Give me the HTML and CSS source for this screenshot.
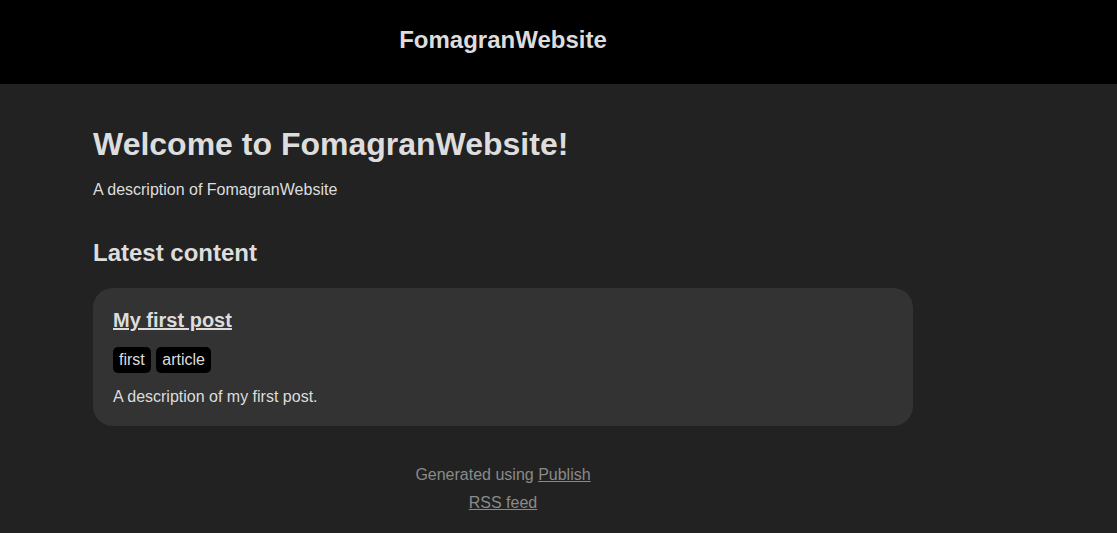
FILE: index.html
```html
<!DOCTYPE html>
<html lang="en">
<head>
  <meta charset="UTF-8" />
  <meta name="viewport" content="width=device-width, initial-scale=1.0"/>
  <title>FomagranWebsite</title>
  <link rel="stylesheet" href="styles.css">
</head>
<body>

<header>
  <div class="wrapper">
    <a class="site-name" href="#">FomagranWebsite</a>
  </div>
</header>

<div class="wrapper content">
  <h1>Welcome to FomagranWebsite!</h1>
  <p class="description">A description of FomagranWebsite</p>
  <h2>Latest content</h2>
  <ul class="item-list">
    <li>
      <article>
        <h1><a href="#">My first post</a></h1>
        <ul class="tag-list">
          <li><a href="#">first</a></li>
          <li><a href="#">article</a></li>
        </ul>
        <p>A description of my first post.</p>
      </article>
    </li>
  </ul>
</div>

<footer>
  <p>Generated using <a href="#">Publish</a></p>
  <p><a href="#">RSS feed</a></p>
</footer>

</body>
</html>
```

FILE: styles.css
```css
* { margin: 0; padding: 0; box-sizing: border-box; }
body {
  background: #222;
  color: #ddd;
  font-family: "Liberation Sans", Arial, sans-serif;
  font-size: 16px;
}
.wrapper {
  max-width: 900px;
  margin-left: 53px;
  padding: 40px;
}
header { background: #000; }
header .wrapper {
  padding: 26px 40px 30px;
  text-align: center;
}
.site-name {
  display: inline-block;
  font-size: 24px;
  line-height: 28px;
  font-weight: bold;
  color: #ddd;
  text-decoration: none;
}
.content { padding-top: 42px; }
h1 { font-size: 32px; margin-bottom: 18px; }
h2 { font-size: 24px; margin: 20px 0 21px; }
p { margin-bottom: 10px; }
a { color: inherit; }
.description { margin-bottom: 40px; }
.item-list { list-style: none; }
.item-list > li {
  padding: 20px;
  border-radius: 20px;
  background: #333;
}
.item-list h1 { font-size: 20px; line-height: 24px; margin-bottom: 15px; }
.item-list p { margin-bottom: 0; }
.tag-list { list-style: none; margin-bottom: 15px; }
.tag-list li {
  display: inline-block;
  background: #000;
  color: #ddd;
  padding: 4px 6px;
  border-radius: 5px;
  margin-right: 1px;
}
.tag-list a { text-decoration: none; }
footer {
  width: 900px;
  margin-left: 53px;
  padding: 0 40px 40px;
  text-align: center;
  color: #8a8a8a;
}
```
